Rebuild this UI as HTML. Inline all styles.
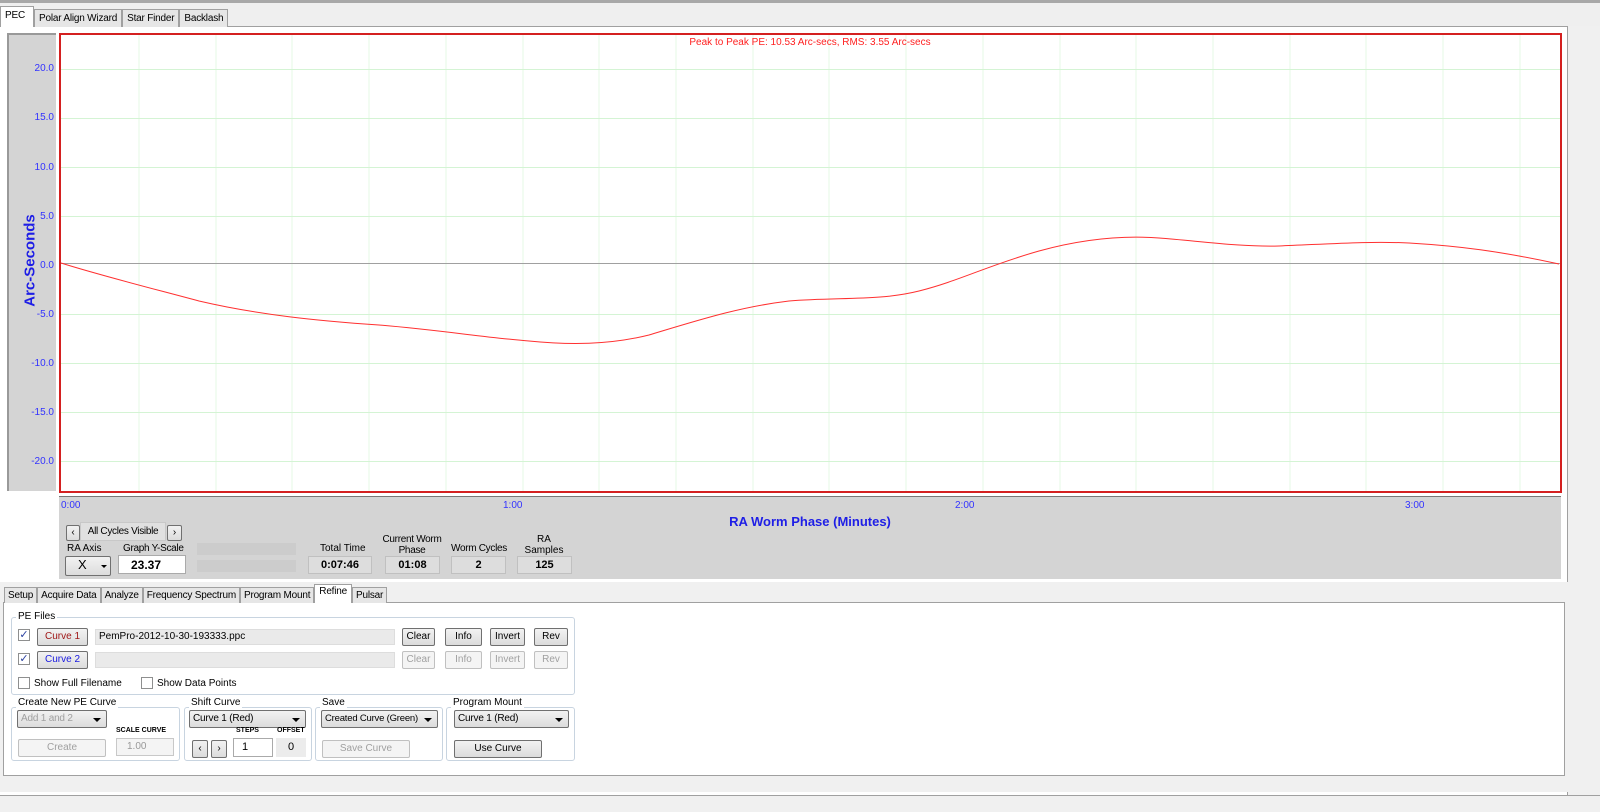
<!DOCTYPE html>
<html><head><meta charset="utf-8"><style>
*{box-sizing:border-box;margin:0;padding:0}
body{width:1600px;height:812px;background:#f0f0f0;font-family:"Liberation Sans",sans-serif;font-size:10px;color:#000;position:relative;overflow:hidden}
.a{position:absolute;white-space:nowrap}
.tabs{position:absolute;display:flex;align-items:flex-end}
.tab{border:1px solid #a0a0a0;border-bottom:none;background:#e6e6e6;font-size:10px;padding:3px 4px 2px;height:18px;white-space:nowrap;letter-spacing:-0.2px}
.btn{position:absolute;border:1px solid #707070;border-radius:2px;background:linear-gradient(#f2f2f2,#dcdcdc);text-align:center;font-size:10px;line-height:16px;height:18px;white-space:nowrap}
.dis{color:#a0a0a0;border-color:#c0c0c0;background:#f4f4f4}
.box{position:absolute;border:1px solid #c8d4e0;border-radius:3px}
.lbl{position:absolute;font-size:10px;background:#fff;padding:0 2px;white-space:nowrap}
.cb{position:absolute;width:12px;height:12px;border:1px solid #8e8f8f;background:#fff}
.sel{position:absolute;border:1px solid #707070;background:linear-gradient(#f2f2f2,#dcdcdc);height:18px;font-size:10px;padding:2px 3px;border-radius:2px;white-space:nowrap;overflow:hidden;letter-spacing:-0.2px}
.sel:after{content:"";position:absolute;right:5px;top:7px;border:4px solid transparent;border-top:4px solid #000}
.ro{position:absolute;border:1px solid #c0c0c0;background:#ddd;text-align:center;font-weight:bold;font-size:11px;line-height:16px;height:18px}
.yl{position:absolute;right:1546px;color:#3232ff;font-size:10px}
</style></head><body>
<div class="a" style="left:0;top:0;width:1600px;height:3px;background:#a8a8a8"></div>
<div class="a" style="left:0;top:3px;width:1600px;height:23px;background:#efefef"></div>
<div class="tabs" style="left:0;top:6px;height:21px;z-index:2">
<div class="tab" style="height:21px;background:#fff;width:34px">PEC</div>
<div class="tab">Polar Align Wizard</div>
<div class="tab">Star Finder</div>
<div class="tab">Backlash</div>
</div>
<div class="a" style="left:0;top:26px;width:1568px;height:770px;border:1px solid #a0a0a0;border-left:none;background:#fff"></div>
<div class="a" style="left:7px;top:33px;width:49px;height:458px;background:#d4d4d4;border-top:2px solid #999;border-left:2px solid #999"></div>
<div class="a" style="left:-40px;top:252px;width:140px;text-align:center;transform:rotate(-90deg);color:#1e1ee6;font-weight:bold;font-size:15px">Arc-Seconds</div>
<div class="yl" style="top:63px">20.0</div><div class="yl" style="top:112px">15.0</div><div class="yl" style="top:162px">10.0</div><div class="yl" style="top:211px">5.0</div><div class="yl" style="top:260px">0.0</div><div class="yl" style="top:309px">-5.0</div><div class="yl" style="top:358px">-10.0</div><div class="yl" style="top:407px">-15.0</div><div class="yl" style="top:456px">-20.0</div>
<svg class="a" style="left:59px;top:33px" width="1503" height="460">
<g stroke="#e6fae6" stroke-width="1">
<line x1="80" y1="0" x2="80" y2="460"/><line x1="157" y1="0" x2="157" y2="460"/><line x1="233" y1="0" x2="233" y2="460"/><line x1="310" y1="0" x2="310" y2="460"/><line x1="387" y1="0" x2="387" y2="460"/><line x1="464" y1="0" x2="464" y2="460"/><line x1="540" y1="0" x2="540" y2="460"/><line x1="617" y1="0" x2="617" y2="460"/><line x1="694" y1="0" x2="694" y2="460"/><line x1="770" y1="0" x2="770" y2="460"/><line x1="847" y1="0" x2="847" y2="460"/><line x1="924" y1="0" x2="924" y2="460"/><line x1="1001" y1="0" x2="1001" y2="460"/><line x1="1077" y1="0" x2="1077" y2="460"/><line x1="1154" y1="0" x2="1154" y2="460"/><line x1="1231" y1="0" x2="1231" y2="460"/><line x1="1307" y1="0" x2="1307" y2="460"/><line x1="1384" y1="0" x2="1384" y2="460"/><line x1="1461" y1="0" x2="1461" y2="460"/>
</g>
<g stroke="#d4f4d4" stroke-width="1">
<line x1="0" y1="36.5" x2="1503" y2="36.5"/><line x1="0" y1="85.5" x2="1503" y2="85.5"/><line x1="0" y1="134.5" x2="1503" y2="134.5"/><line x1="0" y1="183.5" x2="1503" y2="183.5"/><line x1="0" y1="281.5" x2="1503" y2="281.5"/><line x1="0" y1="330.5" x2="1503" y2="330.5"/><line x1="0" y1="379.5" x2="1503" y2="379.5"/><line x1="0" y1="428.5" x2="1503" y2="428.5"/>
</g>
<line x1="0" y1="230.5" x2="1503" y2="230.5" stroke="#a0a0a0"/>
<path d="M2,230 C40,242 80,252 140,268 C200,282 260,288 320,292 C380,297 430,305 470,308 C510,312 550,312 590,302 C640,287 680,274 730,268 C780,264 820,268 860,258 C900,248 930,232 980,218 C1020,207 1060,202 1100,205 C1140,208 1180,214 1220,213 C1270,211 1310,208 1350,210 C1400,213 1440,218 1500,231" fill="none" stroke="#ff3030" stroke-width="1"/>
<rect x="1" y="1" width="1501" height="458" fill="none" stroke="#d42020" stroke-width="2"/>
<text x="751" y="12" text-anchor="middle" fill="#ff2020" font-size="10" font-family="Liberation Sans">Peak to Peak PE: 10.53 Arc-secs,  RMS: 3.55 Arc-secs</text>
</svg>
<div class="a" style="left:59px;top:496px;width:1502px;height:83px;background:#d4d4d4;border-top:1px solid #777"></div>
<div class="a" style="left:61px;top:500px;color:#3232ff">0:00</div>
<div class="a" style="left:503px;top:500px;color:#3232ff">1:00</div>
<div class="a" style="left:955px;top:500px;color:#3232ff">2:00</div>
<div class="a" style="left:1405px;top:500px;color:#3232ff">3:00</div>
<div class="a" style="left:59px;top:514px;width:1502px;text-align:center;color:#1e1ee6;font-weight:bold;font-size:13px">RA Worm Phase (Minutes)</div>
<div class="btn" style="left:66px;top:525px;width:14px;height:16px;line-height:14px">&lsaquo;</div>
<div class="a" style="left:80px;top:522px;width:86px;height:19px;background:#e0e0e0;border:1px solid #c8c8c8;text-align:center;line-height:18px;letter-spacing:-0.3px">All Cycles Visible</div>
<div class="btn" style="left:167px;top:525px;width:15px;height:16px;line-height:14px">&rsaquo;</div>
<div class="a" style="left:67px;top:543px">RA Axis</div>
<div class="a" style="left:123px;top:543px;letter-spacing:-0.3px">Graph Y-Scale</div>
<div class="btn" style="left:65px;top:556px;width:46px;height:20px;text-align:left;padding-left:12px;font-size:13px">X</div>
<div class="a" style="left:101px;top:565px;border:3px solid transparent;border-top:3px solid #000"></div>
<div class="a" style="left:118px;top:555px;width:68px;height:19px;background:#fff;border:1px solid #aaa;font-weight:bold;font-size:12px;padding:2px 12px">23.37</div>
<div class="a" style="left:197px;top:543px;width:99px;height:12px;background:#ccc"></div>
<div class="a" style="left:197px;top:560px;width:99px;height:12px;background:#ccc"></div>
<div class="a" style="left:320px;top:543px">Total Time</div>
<div class="a" style="left:376px;top:534px;width:72px;text-align:center;line-height:11px;letter-spacing:-0.3px">Current Worm<br>Phase</div>
<div class="a" style="left:451px;top:543px;letter-spacing:-0.3px">Worm Cycles</div>
<div class="a" style="left:516px;top:534px;width:56px;text-align:center;line-height:11px">RA<br>Samples</div>
<div class="ro" style="left:308px;top:556px;width:64px">0:07:46</div>
<div class="ro" style="left:385px;top:556px;width:55px">01:08</div>
<div class="ro" style="left:451px;top:556px;width:55px">2</div>
<div class="ro" style="left:517px;top:556px;width:55px">125</div>
<div class="a" style="left:0;top:582px;width:1568px;height:210px;background:#f0f0f0"></div>
<div class="tabs" style="left:4px;top:584px;height:19px;z-index:2">
<div class="tab" style="height:16px;padding:2px 3px 0">Setup</div>
<div class="tab" style="height:16px;padding:2px 3px 0">Acquire Data</div>
<div class="tab" style="height:16px;padding:2px 3px 0">Analyze</div>
<div class="tab" style="height:16px;padding:2px 3px 0">Frequency Spectrum</div>
<div class="tab" style="height:16px;padding:2px 3px 0">Program Mount</div>
<div class="tab" style="height:19px;background:#fff;padding:1px 4px 0">Refine</div>
<div class="tab" style="height:16px;padding:2px 3px 0">Pulsar</div>
</div>
<div class="a" style="left:3px;top:602px;width:1562px;height:174px;border:1px solid #a0a0a0;background:#fff"></div>
<div class="box" style="left:11px;top:617px;width:564px;height:78px"></div>
<div class="lbl" style="left:16px;top:611px">PE Files</div>
<div class="cb" style="left:18px;top:629px;color:#2a40a0;font-size:11px;line-height:10px;text-align:center">✓</div>
<div class="cb" style="left:18px;top:653px;color:#2a40a0;font-size:11px;line-height:10px;text-align:center">✓</div>
<div class="btn" style="left:37px;top:628px;width:51px;color:#a01818">Curve 1</div>
<div class="btn" style="left:37px;top:651px;width:51px;color:#1818e0">Curve 2</div>
<div class="a" style="left:95px;top:629px;width:300px;height:16px;background:#eaeaea;border:1px solid #ddd;padding:1px 3px">PemPro-2012-10-30-193333.ppc</div>
<div class="a" style="left:95px;top:652px;width:300px;height:16px;background:#eaeaea;border:1px solid #ddd"></div>
<div class="btn" style="left:402px;top:628px;width:33px">Clear</div>
<div class="btn" style="left:445px;top:628px;width:37px">Info</div>
<div class="btn" style="left:490px;top:628px;width:35px">Invert</div>
<div class="btn" style="left:534px;top:628px;width:34px">Rev</div>
<div class="btn dis" style="left:402px;top:651px;width:33px">Clear</div>
<div class="btn dis" style="left:445px;top:651px;width:37px">Info</div>
<div class="btn dis" style="left:490px;top:651px;width:35px">Invert</div>
<div class="btn dis" style="left:534px;top:651px;width:34px">Rev</div>
<div class="cb" style="left:18px;top:677px"></div><div class="a" style="left:34px;top:678px">Show Full Filename</div>
<div class="cb" style="left:141px;top:677px"></div><div class="a" style="left:157px;top:678px">Show Data Points</div>
<div class="box" style="left:11px;top:707px;width:169px;height:54px"></div>
<div class="lbl" style="left:16px;top:697px">Create New PE Curve</div>
<div class="sel dis" style="left:17px;top:710px;width:90px;color:#a0a0a0">Add 1 and 2</div>
<div class="a" style="left:116px;top:727px;font-size:7px;font-weight:bold">SCALE CURVE</div>
<div class="btn dis" style="left:18px;top:739px;width:88px">Create</div>
<div class="a" style="left:116px;top:738px;width:58px;height:18px;border:1px solid #c8c8c8;background:#f4f4f4;color:#999;padding:2px 10px">1.00</div>
<div class="box" style="left:184px;top:707px;width:128px;height:54px"></div>
<div class="lbl" style="left:189px;top:697px">Shift Curve</div>
<div class="sel" style="left:189px;top:710px;width:117px">Curve 1 (Red)</div>
<div class="a" style="left:236px;top:727px;font-size:7px;font-weight:bold">STEPS</div>
<div class="a" style="left:277px;top:727px;font-size:7px;font-weight:bold">OFFSET</div>
<div class="btn" style="left:192px;top:740px;width:16px">&lsaquo;</div>
<div class="btn" style="left:211px;top:740px;width:16px">&rsaquo;</div>
<div class="a" style="left:233px;top:738px;width:40px;height:19px;border:1px solid #aaa;background:#fff;padding:2px 8px;font-size:11px">1</div>
<div class="a" style="left:276px;top:738px;width:30px;height:19px;background:#ececec;text-align:center;line-height:18px;font-size:11px">0</div>
<div class="box" style="left:315px;top:707px;width:128px;height:54px"></div>
<div class="lbl" style="left:320px;top:697px">Save</div>
<div class="sel" style="left:321px;top:710px;width:117px;padding-right:14px;font-size:9.5px">Created Curve (Green)</div>
<div class="btn dis" style="left:322px;top:740px;width:88px">Save Curve</div>
<div class="box" style="left:446px;top:707px;width:129px;height:54px"></div>
<div class="lbl" style="left:451px;top:697px">Program Mount</div>
<div class="sel" style="left:454px;top:710px;width:115px">Curve 1 (Red)</div>
<div class="btn" style="left:454px;top:740px;width:88px">Use Curve</div>
<div class="a" style="left:0;top:795px;width:1600px;height:17px;background:#f0f0f0;border-top:1px solid #a0a0a0"></div>
</body></html>
